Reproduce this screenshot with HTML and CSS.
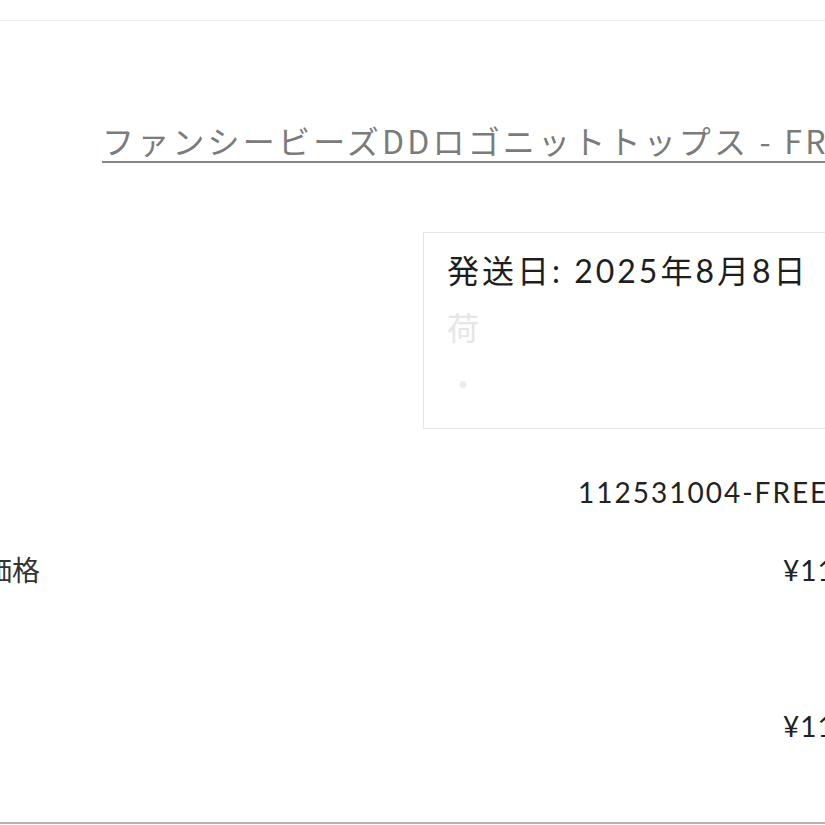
FILE: index.html
```html
<!DOCTYPE html>
<html lang="ja">
<head>
  <meta charset="UTF-8">
  <meta name="viewport" content="width=device-width, initial-scale=1.0">
  <title>注文詳細</title>
  <link rel="stylesheet" href="styles.css">
</head>
<body>

  <header class="topbar"></header>

  <main class="order">
    <h2 class="product-title"><a href="#">ファンシービーズDDロゴニットトップス - FREE</a></h2>

    <div class="shipping">
      <p class="shipping-date">発送日: 2025年8月8日</p>
      <p class="shipping-hidden"><span class="ghost">荷</span>物追跡番号: 0000-0000-0000</p>
      <p class="shipping-hidden"><span class="ghost small">・</span>ヤマト運輸</p>
    </div>

    <p class="sku">112531004-FREE</p>

    <div class="price-row">
      <span class="price-label">価格</span>
      <span class="price-value">¥11,000</span>
    </div>

    <div class="price-row total">
      <span class="price-label"></span>
      <span class="price-value">¥11,000</span>
    </div>
  </main>

  <footer class="bottom-line"></footer>

</body>
</html>
```

FILE: styles.css
```css
body {
  margin: 0;
  background: #fff;
  font-family: "Lato", "Noto Sans CJK JP", sans-serif;
  color: #222;
  overflow: hidden;
}

.topbar {
  height: 20px;
  border-bottom: 1px solid #efefef;
}

.order {
  width: 1100px;
}

.product-title {
  margin: 103px 0 0 102px;
  font-family: "Noto Sans CJK JP", sans-serif;
  font-weight: 400;
  font-size: 32px;
  line-height: 32px;
  letter-spacing: 3.2px;
  white-space: nowrap;
}

.product-title a {
  display: inline-block;
  color: #7b7b7b;
  text-decoration: none;
  padding-bottom: 5px;
  border-bottom: 2px solid #858585;
}

/* 発送情報の枠 */
.shipping {
  margin: 69px 0 0 423px;
  width: 560px;
  border: 1px solid #e6e6e6;
  padding: 18px 23px 23px;
}

.shipping p {
  margin: 0;
  font-size: 32px;
  line-height: 40px;
  letter-spacing: 3px;
  white-space: nowrap;
}

.shipping p + p {
  margin-top: 17px;
}

.shipping-date {
  color: #1e1e1e;
}

/* ぼかされた行 */
.shipping-hidden {
  color: #fff;
}

.shipping-hidden .ghost {
  color: #e6e6e6;
}

.shipping-hidden .ghost.small {
  color: #ececec;
}

.sku {
  margin: 43px 0 0 578px;
  font-size: 28px;
  line-height: 40px;
  letter-spacing: 2px;
  white-space: nowrap;
}

.price-row {
  display: grid;
  grid-template-columns: 799px auto;
  margin: 38px 0 0 -16px;
  font-size: 28px;
  line-height: 40px;
  white-space: nowrap;
}

.price-row.total {
  margin-top: 116px;
}

.price-label {
  color: #333;
}

.price-value {
  letter-spacing: 1px;
}

.bottom-line {
  margin-top: 76px;
  border-top: 2px solid #b3b3b3;
}
```
